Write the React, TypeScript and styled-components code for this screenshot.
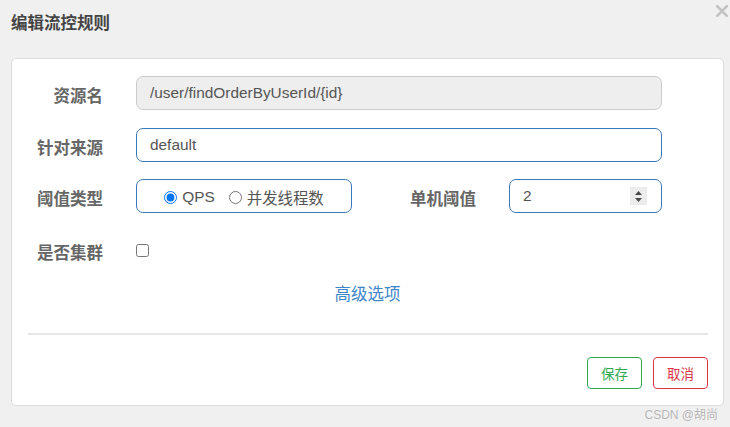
import React from 'react';
import styled, { createGlobalStyle } from 'styled-components';

const GlobalStyle = createGlobalStyle`
  html, body {
    margin: 0;
    padding: 0;
    background: #f0f0f0;
    font-family: "Liberation Sans", "Noto Sans CJK SC", sans-serif;
  }
`;

const Page = styled.div`
  position: relative;
  width: 730px;
  height: 427px;
  padding: 0 6px 0 11px;
  box-sizing: border-box;
  overflow: hidden;
`;

const Header = styled.div`
  display: flex;
  justify-content: space-between;
  align-items: flex-start;
  height: 58px;
  margin-right: -4px;
`;

const Title = styled.h4`
  margin: 11px 0 0;
  font-size: 16.5px;
  line-height: 24px;
  font-weight: 700;
  color: #444;
`;

const CloseButton = styled.button`
  margin-top: 5px;
  padding: 0;
  border: 0;
  background: none;
  width: 12px;
  height: 12px;
  display: flex;
  cursor: pointer;
`;

const Card = styled.div`
  background: #fff;
  border: 1px solid #dcdcdc;
  border-radius: 5px;
  padding: 17px 15px 16px 0;
  height: 348px;
  box-sizing: border-box;
  display: flex;
  flex-direction: column;
`;

const Row = styled.div<{ $mt?: number }>`
  display: flex;
  align-items: center;
  height: 34px;
  margin-top: ${p => p.$mt ?? 0}px;
`;

const Label = styled.label<{ $w: number }>`
  width: ${p => p.$w}px;
  flex-shrink: 0;
  text-align: right;
  margin-right: 33px;
  padding-top: 3px;
  font-size: 16.5px;
  font-weight: 700;
  color: #666;
`;

const TextInput = styled.input<{ $readonly?: boolean }>`
  width: 526px;
  height: 34px;
  box-sizing: border-box;
  padding: 0 13px;
  border: 1px solid ${p => (p.$readonly ? '#cccccc' : '#3a79b8')};
  background: ${p => (p.$readonly ? '#eeeeee' : '#fff')};
  border-radius: 7px;
  font-family: inherit;
  font-size: 15.4px;
  color: #555;
  outline: none;
`;

const RadioBox = styled.div`
  width: 216px;
  height: 34px;
  box-sizing: border-box;
  border: 1px solid #3a79b8;
  border-radius: 7px;
  display: flex;
  align-items: center;
  justify-content: center;
  gap: 14px;
  padding-top: 2px;
`;

const RadioOption = styled.label`
  display: flex;
  align-items: center;
  gap: 5px;
  font-size: 15.4px;
  color: #555;

  input {
    margin: 0;
    width: 13px;
    height: 13px;
  }
`;

const NumberBox = styled.div`
  width: 153px;
  height: 34px;
  box-sizing: border-box;
  border: 1px solid #3a79b8;
  border-radius: 7px;
  display: flex;
  align-items: center;
  padding: 0 14px 0 13px;
`;

const NumberValue = styled.input`
  flex: 1;
  min-width: 0;
  border: 0;
  outline: none;
  padding: 0;
  font-family: inherit;
  font-size: 15.4px;
  color: #555;
  background: transparent;
`;

const Spinner = styled.div`
  width: 17px;
  height: 18px;
  background: #ececec;
  display: flex;
  align-items: center;
  justify-content: center;
`;

const Checkbox = styled.input`
  margin: 1px 0 0;
  width: 13px;
  height: 13px;
`;

const AdvancedLink = styled.a`
  align-self: center;
  margin: 17px 0 0 15px;
  font-size: 16.5px;
  line-height: 20px;
  color: #3f86c8;
  text-decoration: none;
  cursor: pointer;
`;

const Divider = styled.div`
  height: 2px;
  background: #e6e6e6;
  margin: 29px 0 0 16px;
`;

const Footer = styled.div`
  display: flex;
  justify-content: flex-end;
  gap: 11px;
  margin-top: 22px;
`;

const OutlineButton = styled.button<{ $color: string }>`
  width: 55px;
  height: 32px;
  border: 1px solid ${p => p.$color};
  border-radius: 4px;
  background: #fff;
  color: ${p => p.$color};
  font-family: inherit;
  font-size: 13.5px;
  padding: 0;
  cursor: pointer;
`;

const Watermark = styled.div`
  position: absolute;
  right: 12px;
  bottom: 5px;
  font-size: 12px;
  color: #b4b4b4;
  text-shadow: 0 0 1px #fff;
`;

export default function App() {
  return (
    <Page>
      <GlobalStyle />
      <Header>
        <Title>编辑流控规则</Title>
        <CloseButton aria-label="close">
          <svg width="12" height="12" viewBox="0 0 12 12">
            <path d="M1.2 1.2 L10.8 10.8 M10.8 1.2 L1.2 10.8" stroke="#c2c2c2" strokeWidth="2.6" strokeLinecap="square" />
          </svg>
        </CloseButton>
      </Header>
      <Card>
        <Row>
          <Label $w={91}>资源名</Label>
          <TextInput $readonly readOnly value="/user/findOrderByUserId/{id}" />
        </Row>
        <Row $mt={18}>
          <Label $w={91}>针对来源</Label>
          <TextInput defaultValue="default" />
        </Row>
        <Row $mt={17}>
          <Label $w={91}>阈值类型</Label>
          <RadioBox>
            <RadioOption>
              <input type="radio" name="grade" defaultChecked />
              QPS
            </RadioOption>
            <RadioOption>
              <input type="radio" name="grade" />
              并发线程数
            </RadioOption>
          </RadioBox>
          <Label $w={124}>单机阈值</Label>
          <NumberBox>
            <NumberValue defaultValue="2" />
            <Spinner>
              <svg width="9" height="13" viewBox="0 0 9 13">
                <path d="M4.5 1 L8 5 L1 5 Z M4.5 12 L8 8 L1 8 Z" fill="#4a4a4a" />
              </svg>
            </Spinner>
          </NumberBox>
        </Row>
        <Row $mt={20}>
          <Label $w={91}>是否集群</Label>
          <Checkbox type="checkbox" />
        </Row>
        <AdvancedLink>高级选项</AdvancedLink>
        <Divider />
        <Footer>
          <OutlineButton $color="#2fa84f">保存</OutlineButton>
          <OutlineButton $color="#dc3545">取消</OutlineButton>
        </Footer>
      </Card>
      <Watermark>CSDN @胡尚</Watermark>
    </Page>
  );
}
